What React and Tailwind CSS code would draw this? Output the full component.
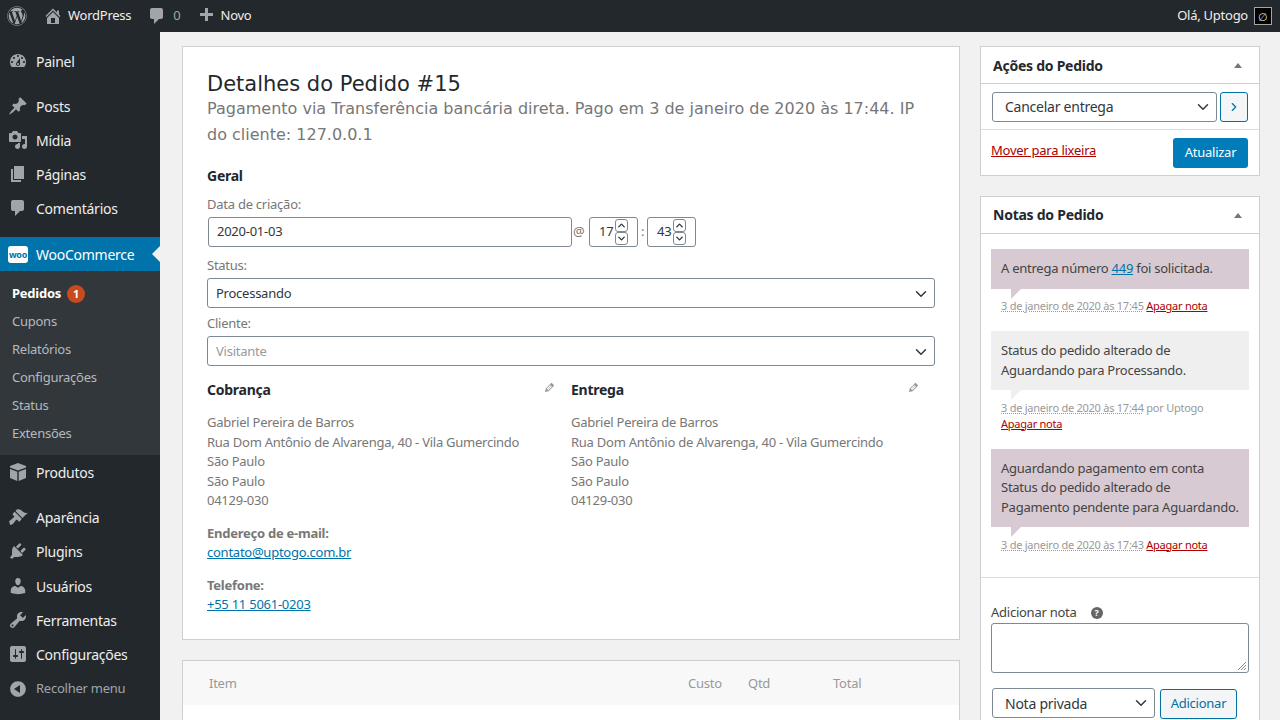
import { ChevronDown, ChevronUp, ChevronRight } from 'lucide-react';
import { FaWordpress } from 'react-icons/fa';

const icons = {
  home: 'M16 8.5l1.53 1.53-1.06 1.06L10 4.62l-6.47 6.47-1.06-1.06L10 2.5l4 4v-2h2v4zm-6-2.46l6 5.99V18H4v-5.97zM12 17v-5H8v5h4z',
  comment: 'M5 2h9c1.1 0 2 .9 2 2v7c0 1.1-.9 2-2 2h-2l-5 5v-5H5c-1.1 0-2-.9-2-2V4c0-1.1.9-2 2-2z',
  plus: 'M17 7v3h-5v5H9v-5H4V7h5V2h3v5h5z',
  dashboard: 'M3.76 16h12.48c1.1-1.37 1.76-3.11 1.76-5 0-4.42-3.58-8-8-8s-8 3.58-8 8c0 1.89.66 3.63 1.76 5zM10 4c.55 0 1 .45 1 1s-.45 1-1 1-1-.45-1-1 .45-1 1-1zM6 6c.55 0 1 .45 1 1s-.45 1-1 1-1-.45-1-1 .45-1 1-1zm8 0c.55 0 1 .45 1 1s-.45 1-1 1-1-.45-1-1 .45-1 1-1zm-5.37 5.55L12 7v6c0 1.1-.9 2-2 2s-2-.9-2-2c0-.57.24-1.08.63-1.45zM4 10c.55 0 1 .45 1 1s-.45 1-1 1-1-.45-1-1 .45-1 1-1zm12 0c.55 0 1 .45 1 1s-.45 1-1 1-1-.45-1-1 .45-1 1-1zm-5 3c0-.55-.45-1-1-1s-1 .45-1 1 .45 1 1 1 1-.45 1-1z',
  post: 'M10.44 3.02l1.82-1.82 6.36 6.35-1.83 1.82c-1.05-.68-2.48-.57-3.41.36l-.75.75c-.92.93-1.04 2.35-.35 3.41l-1.83 1.82-2.41-2.41-2.8 2.79c-.42.42-3.38 2.71-3.8 2.29s1.86-3.39 2.28-3.81l2.79-2.79L4.1 9.36l1.83-1.82c1.05.69 2.48.57 3.4-.36l.75-.75c.93-.92 1.05-2.35.36-3.41z',
  media: 'M13 11V4c0-.55-.45-1-1-1h-1.67L9 1H5L3.67 3H2c-.55 0-1 .45-1 1v7c0 .55.45 1 1 1h10c.55 0 1-.45 1-1zM7 4.5c1.38 0 2.5 1.12 2.5 2.5S8.38 9.5 7 9.5 4.5 8.38 4.5 7 5.62 4.5 7 4.5zM14 6h5v10.5c0 1.38-1.12 2.5-2.5 2.5S14 17.88 14 16.5s1.12-2.5 2.5-2.5c.17 0 .34.02.5.05V9h-3V6zm-4 8.05V13h2v3.5c0 1.38-1.12 2.5-2.5 2.5S7 17.88 7 16.5 8.12 14 9.5 14c.17 0 .34.02.5.05z',
  page: 'M6 15V2h10v13H6zm-1 1h8v2H3V5h2v11z',
  box: 'M10 1l8 3v1.5L10 8.5 2 5.500V4zM2 7l7.300 2.800V19L2 16zM18 7l-7.300 2.800V19l7.300-3z',
  brush: 'M14.480 11.060L7.410 3.990l1.500-1.500c.5-.56 2.300-.47 3.510.32 1.210.8 1.430 1.280 2.910 2.100 1.180.64 2.450 1.260 4.450.85zm-.71.71L6.700 4.700 4.930 6.470c-.39.39-.39 1.020 0 1.410l1.060 1.060c.39.39.39 1.030 0 1.420-.6.6-1.430 1.110-2.210 1.690-.35.26-.7.53-1.010.84C1.430 13.230 1 14.440 1.300 15.300l.8 2.500c.86.3 2.080-.13 3.410-1.470.31-.31.58-.66.84-1.010.58-.78 1.090-1.610 1.690-2.210.39-.39 1.030-.39 1.420 0l1.060 1.060c.39.39 1.020.39 1.410 0z',
  plugin: 'M13.110 4.360L9.870 7.600 8 5.730l3.240-3.240c.35-.34 1.050-.2 1.560.32.52.51.66 1.210.31 1.550zm-8 1.770l.91-1.120 9.010 9.010-1.190.84c-.71.71-2.630 1.160-3.820 1.160H6.140L4.900 17.260c-.59.59-1.540.59-2.120 0-.59-.58-.59-1.530 0-2.120l1.240-1.240v-3.880c0-1.130.4-3.190 1.090-3.890zm7.260 3.970l3.240-3.240c.34-.35 1.040-.21 1.550.31.52.51.66 1.210.31 1.550l-3.240 3.250z',
  users: 'M10 9.250c-2.270 0-2.730-3.440-2.730-3.440C7 4.020 7.820 2 9.970 2c2.160 0 2.980 2.020 2.710 3.810 0 0-.41 3.440-2.680 3.440zm0 2.570L12.720 10c2.390 0 4.520 2.330 4.520 4.530v2.490s-3.650 1.130-7.240 1.130c-3.650 0-7.240-1.130-7.240-1.130v-2.490c0-2.250 1.940-4.480 4.470-4.480z',
  tools: 'M16.680 9.770c-1.340 1.340-3.300 1.670-4.950.99l-5.410 6.520c-.99.99-2.590.99-3.580 0s-.99-2.590 0-3.570l6.520-5.420c-.68-1.650-.35-3.610.99-4.950 1.280-1.280 3.120-1.620 4.720-1.060l-2.890 2.890 2.820 2.820 2.860-2.870c.53 1.580.18 3.390-1.080 4.650zM3.810 16.210c.4.39 1.040.39 1.430 0 .4-.4.4-1.040 0-1.430-.39-.4-1.030-.4-1.430 0-.39.39-.39 1.030 0 1.430z',
  settings: 'M18 16V4c0-1.100-.9-2-2-2H4c-1.100 0-2 .9-2 2v12c0 1.100.9 2 2 2h12c1.100 0 2-.9 2-2zM8 11h1c.55 0 1 .45 1 1s-.45 1-1 1H8v1.500c0 .28-.22.5-.5.5s-.5-.22-.5-.5V13H6c-.55 0-1-.45-1-1s.45-1 1-1h1V5.500c0-.28.22-.5.5-.5s.5.22.5.5V11zm5-2h-1c-.55 0-1-.45-1-1s.45-1 1-1h1V5.500c0-.28.22-.5.5-.5s.5.22.5.5V7h1c.55 0 1 .45 1 1s-.45 1-1 1h-1v5.500c0 .28-.22.5-.5.5s-.5-.22-.5-.5V9z',
  collapse: 'M10 2.160c4.330 0 7.840 3.510 7.840 7.840s-3.510 7.840-7.840 7.840S2.160 14.330 2.160 10 5.670 2.160 10 2.160zM12 14V6l-6 4z',
  pencil: 'M13.890 3.390l2.710 2.720c.46.46.42 1.240.03 1.640l-8.010 8.020-5.560 1.160 1.160-5.580s7.600-7.630 7.990-8.030c.39-.39 1.220-.39 1.680.07zm-2.730 2.790l-5.590 5.610 1.110 1.110 5.540-5.650zm-2.970 8.230l5.580-5.600-1.070-1.080-5.590 5.600z',
};

function Dash({ name, className }) {
  return (
    <svg viewBox="0 0 20 20" className={className} fill="currentColor">
      <path d={icons[name]} />
    </svg>
  );
}

function MenuItem({ icon, label, className = '' }) {
  return (
    <div className={`flex items-center h-[34px] ${className}`}>
      <div className="w-9 flex justify-center text-[#a0a5aa]"><Dash name={icon} className="w-5 h-5" /></div>
      <span className="text-[14px] text-[#eee]">{label}</span>
    </div>
  );
}

function Sidebar() {
  return (
    <aside className="w-40 shrink-0 bg-[#23282d] h-[688px] overflow-hidden">
      <MenuItem icon="dashboard" label="Painel" className="mt-3" />
      <div className="h-[11px]" />
      <MenuItem icon="post" label="Posts" />
      <MenuItem icon="media" label="Mídia" />
      <MenuItem icon="page" label="Páginas" />
      <MenuItem icon="comment" label="Comentários" />
      <div className="relative flex items-center h-[34px] mt-[12px] bg-[#0073aa]">
        <div className="w-9 flex justify-center">
          <div className="w-5 h-[17px] rounded-[3px] bg-white flex items-center justify-center text-[9px] font-bold leading-none text-[#0073aa]">woo</div>
        </div>
        <span className="text-[14px] text-white">WooCommerce</span>
        <div className="absolute right-0 top-[9px] border-y-8 border-r-8 border-y-transparent border-r-[#f1f1f1]" />
      </div>
      <div className="bg-[#32373c] pt-[9px] h-[184px] text-[13px] text-[#b4b9be] pl-3">
        <div className="h-7 flex items-center gap-[6px] font-bold text-white">
          Pedidos
          <span className="w-[18px] h-[18px] rounded-full bg-[#ca4a1f] text-white text-[11px] flex items-center justify-center">1</span>
        </div>
        <div className="h-7 flex items-center">Cupons</div>
        <div className="h-7 flex items-center">Relatórios</div>
        <div className="h-7 flex items-center">Configurações</div>
        <div className="h-7 flex items-center">Status</div>
        <div className="h-7 flex items-center">Extensões</div>
      </div>
      <MenuItem icon="box" label="Produtos" />
      <div className="h-[11px]" />
      <MenuItem icon="brush" label="Aparência" />
      <MenuItem icon="plugin" label="Plugins" />
      <MenuItem icon="users" label="Usuários" className="mt-[1px]" />
      <MenuItem icon="tools" label="Ferramentas" />
      <MenuItem icon="settings" label="Configurações" />
      <div className="flex items-center h-[34px] mt-[1px]">
        <div className="w-9 flex justify-center text-[#a0a5aa]"><Dash name="collapse" className="w-5 h-5" /></div>
        <span className="text-[13px] text-[#a0a5aa]">Recolher menu</span>
      </div>
    </aside>
  );
}

function TopBar() {
  return (
    <header className="h-8 bg-[#23282d] flex items-center justify-between text-[13px] text-[#eee] shrink-0">
      <div className="flex items-center">
        <FaWordpress className="ml-[7px] w-5 h-5 text-[#a0a5aa]" />
        <Dash name="home" className="ml-[16px] w-5 h-5 text-[#a0a5aa]" />
        <span className="ml-[5px]">WordPress</span>
        <Dash name="comment" className="ml-[16px] w-5 h-5 text-[#a0a5aa]" />
        <span className="ml-[6px] text-[#a0a5aa]">0</span>
        <Dash name="plus" className="ml-[15px] w-5 h-5 text-[#a0a5aa]" />
        <span className="ml-[5px]">Novo</span>
      </div>
      <div className="flex items-center">
        <span>Olá, Uptogo</span>
        <div className="ml-[6px] mr-[8px] w-[18px] h-[18px] border border-[#a0a5aa] bg-black flex items-center justify-center text-[11px] leading-none text-[#ddd]">∅</div>
      </div>
    </header>
  );
}

function SelectBox({ label, muted, className = '' }) {
  return (
    <div className={`h-[30px] border border-[#7e8993] rounded-[3px] bg-white flex items-center justify-between ${className}`}>
      <span className={muted ? 'text-[#999]' : 'text-[#32373c]'}>{label}</span>
      <ChevronDown className="w-[18px] h-[18px] mr-[4px] text-[#32373c]" strokeWidth={2} />
    </div>
  );
}

function Spinner({ value }) {
  return (
    <div className="w-[49px] h-[30px] border border-[#7e8993] rounded-[3px] bg-white flex items-center pl-[9px] text-[13px] text-[#32373c]">
      <span className="w-[16px]">{value}</span>
      <div className="flex flex-col">
        <div className="w-[13px] h-[13px] border border-[#7e8993] rounded-[3px] flex items-center justify-center"><ChevronUp className="w-[11px] h-[11px]" strokeWidth={3} /></div>
        <div className="w-[13px] h-[13px] border border-[#7e8993] rounded-[3px] flex items-center justify-center"><ChevronDown className="w-[11px] h-[11px]" strokeWidth={3} /></div>
      </div>
    </div>
  );
}

function Address({ title }) {
  return (
    <div className="w-[364px] relative">
      <h3 className="text-[14px] font-bold text-[#23282d] leading-[20px]">{title}</h3>
      <Dash name="pencil" className="absolute right-[15px] top-[1px] w-[13px] h-[13px] text-[#999]" />
      <div className="mt-[13px] text-[13px] leading-[19.5px] text-[#777]">
        <p>Gabriel Pereira de Barros</p>
        <p>Rua Dom Antônio de Alvarenga, 40 - Vila Gumercindo</p>
        <p>São Paulo</p>
        <p>São Paulo</p>
        <p>04129-030</p>
      </div>
    </div>
  );
}

function OrderCard() {
  return (
    <section className="w-[778px] h-[594px] border border-[#ccd0d4] bg-white px-6 pt-[24px]">
      <h2 className="font-['DejaVu_Sans'] tracking-normal text-[21px] leading-[27px] text-[#23282d]">Detalhes do Pedido #15</h2>
      <p className="font-['DejaVu_Sans'] tracking-normal text-[16px] leading-[26px] text-[#777] mt-[-2px]">
        Pagamento via Transferência bancária direta. Pago em 3 de janeiro de 2020 às 17:44. IP do cliente: 127.0.0.1
      </p>
      <h3 className="mt-[18px] text-[14px] font-bold text-[#23282d] leading-[20px]">Geral</h3>
      <p className="mt-[9px] text-[13px] leading-[19px] text-[#777]">Data de criação:</p>
      <div className="mt-[3px] flex items-center">
        <div className="ml-[1px] w-[364px] h-[30px] border border-[#7e8993] rounded-[3px] flex items-center pl-[8px] text-[13px] text-[#32373c]">2020-01-03</div>
        <span className="w-[17px] pl-[1px] text-[13px] text-[#777]">@</span>
        <Spinner value="17" />
        <span className="w-[9px] text-center text-[13px] text-[#777]">:</span>
        <Spinner value="43" />
      </div>
      <p className="mt-[9px] text-[13px] leading-[19px] text-[#777]">Status:</p>
      <SelectBox label="Processando" className="mt-[3px] pl-[8px] pt-[1px] text-[13px]" />
      <p className="mt-[6px] text-[13px] leading-[19px] text-[#777]">Cliente:</p>
      <SelectBox label="Visitante" muted className="mt-[3px] pl-[8px] pt-[1px] text-[13px]" />
      <div className="flex mt-[14px]">
        <Address title="Cobrança" />
        <Address title="Entrega" />
      </div>
      <div className="mt-[13px] text-[13px] leading-[19.5px]">
        <p className="font-bold text-[#777]">Endereço de e-mail:</p>
        <a className="text-[#0073aa] underline">contato@uptogo.com.br</a>
        <p className="mt-[13px] font-bold text-[#777]">Telefone:</p>
        <a className="text-[#0073aa] underline">+55 11 5061-0203</a>
      </div>
    </section>
  );
}

function ItemsCard() {
  return (
    <section className="mt-5 w-[778px] border border-[#ccd0d4] bg-white">
      <div className="h-[44px] pt-[2px] bg-[#f8f8f8] flex items-center text-[13px] text-[#999] pl-[26px]">
        <span className="w-[479px]">Item</span>
        <span className="w-[60px]">Custo</span>
        <span className="w-[85px]">Qtd</span>
        <span>Total</span>
      </div>
      <div className="h-[40px]" />
    </section>
  );
}

function BoxHeader({ title, className = '' }) {
  return (
    <div className="h-[37px] border-b border-[#ccd0d4] flex items-center justify-between pl-3 pr-[17px]">
      <h3 className={`text-[14px] font-bold text-[#23282d] ${className}`}>{title}</h3>
      <div className="border-x-[4px] border-b-[5px] border-x-transparent border-b-[#72777c]" />
    </div>
  );
}

function Note({ children, bg, tail, meta, by, breakDelete }) {
  return (
    <div className="mb-[17px]">
      <div className={`relative px-[10px] py-[10px] text-[13px] leading-[19.5px] text-[#444] ${bg}`}>
        {children}
        <div className={`absolute left-[20px] bottom-[-10px] border-r-[10px] border-b-[10px] border-r-transparent ${tail}`} style={{ transform: 'scaleY(-1)' }} />
      </div>
      <div className="mt-[9.5px] ml-[10px] text-[11px] leading-[16px] text-[#999]">
        <span className="underline decoration-dotted">{meta}</span>{by ? ' por Uptogo' : ' '}
        {breakDelete && <br />}
        <a className="text-[#a00] underline">Apagar nota</a>
      </div>
    </div>
  );
}

function ActionsBox() {
  return (
    <section className="w-[280px] h-[130px] border border-[#ccd0d4] bg-white">
      <BoxHeader title="Ações do Pedido" />
      <div className="h-[46px] border-b border-[#ddd] pl-[11px] flex items-center gap-[3px]">
        <SelectBox label="Cancelar entrega" className="w-[225px] pl-[12px] text-[14px]" />
        <div className="w-[28px] h-[30px] mt-[1px] border border-[#0071a1] rounded-[3px] bg-[#f3f5f6] flex items-center justify-center text-[#0071a1]">
          <ChevronRight className="w-[14px] h-[14px]" strokeWidth={2} />
        </div>
      </div>
      <div className="flex items-start justify-between pl-[10px] pr-[11px] pt-2">
        <a className="mt-[2px] text-[13px] leading-[20px] text-[#a00] underline">Mover para lixeira</a>
        <div className="w-[75px] h-[30px] rounded-[3px] bg-[#007cba] text-white text-[13px] flex items-center justify-center">Atualizar</div>
      </div>
    </section>
  );
}

function NotesBox() {
  return (
    <section className="mt-5 w-[280px] border border-[#ccd0d4] bg-white">
      <BoxHeader title="Notas do Pedido" className="mb-[2px]" />
      <div className="px-[10px] pt-[15px] border-b border-[#ddd] h-[344px]">
        <Note bg="bg-[#d7cad2]" tail="border-b-[#d7cad2]" meta="3 de janeiro de 2020 às 17:45">
          A entrega número <a className="text-[#0073aa] underline">449</a> foi solicitada.
        </Note>
        <Note bg="bg-[#efefef]" tail="border-b-[#efefef]" meta="3 de janeiro de 2020 às 17:44" by breakDelete>
          Status do pedido alterado de<br />Aguardando para Processando.
        </Note>
        <Note bg="bg-[#d7cad2]" tail="border-b-[#d7cad2]" meta="3 de janeiro de 2020 às 17:43">
          Aguardando pagamento em conta<br />Status do pedido alterado de<br />Pagamento pendente para Aguardando.
        </Note>
      </div>
      <div className="px-[10px] pt-[25px] h-[200px]">
        <div className="flex items-center text-[13px] leading-[19px] text-[#444]">
          Adicionar nota
          <span className="ml-[14px] w-[12px] h-[12px] rounded-full bg-[#666] text-white text-[9px] font-bold leading-none flex items-center justify-center">?</span>
        </div>
        <div className="relative mt-[1px] h-[50px] border border-[#7e8993] rounded-[3px]">
          <svg viewBox="0 0 10 10" className="absolute right-[1px] bottom-[1px] w-[10px] h-[10px] text-[#888]" stroke="currentColor" strokeWidth="1"><path d="M9 1L1 9M9 4L4 9M9 7L7 9" /></svg>
        </div>
        <div className="mt-[15px] ml-[1px] flex gap-[5px]">
          <SelectBox label="Nota privada" className="w-[163px] pl-[12px] text-[14px]" />
          <div className="w-[77px] h-[30px] mt-[1px] border border-[#0071a1] rounded-[3px] bg-[#f3f5f6] text-[#0071a1] text-[13px] flex items-center justify-center">Adicionar</div>
        </div>
      </div>
    </section>
  );
}

export default function App() {
  return (
    <div className="h-[720px] overflow-hidden flex flex-col bg-[#f1f1f1] font-['Noto_Sans',sans-serif] tracking-[-0.25px]">
      <TopBar />
      <div className="flex">
        <Sidebar />
        <main className="flex gap-5 pl-[22px] pt-[14px] items-start">
          <div><OrderCard /><ItemsCard /></div>
          <div><ActionsBox /><NotesBox /></div>
        </main>
      </div>
    </div>
  );
}
